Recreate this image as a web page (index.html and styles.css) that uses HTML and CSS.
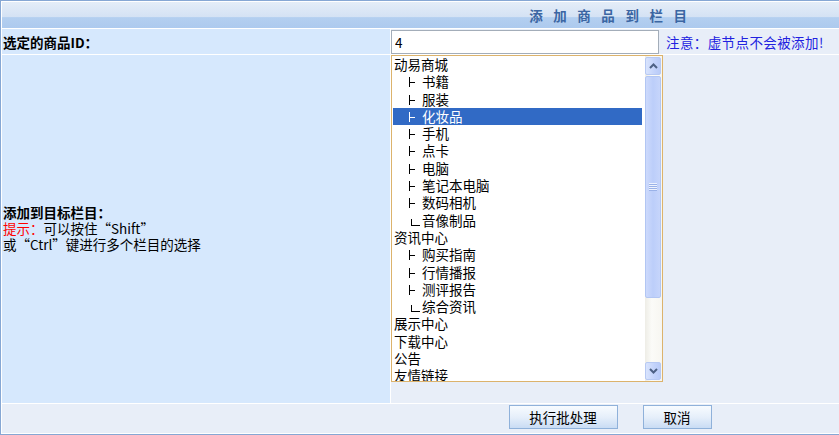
FILE: index.html
```html
<!DOCTYPE html>
<html lang="zh-CN">
<head>
    <meta charset="UTF-8">
    <title>添加商品到栏目</title>
    <link rel="stylesheet" href="styles.css">
</head>
<body>
<form class="batch-form">
    <table class="border-table">
        <colgroup><col class="col-label"><col></colgroup>
        <tr class="title-row">
            <th colspan="2">添 加 商 品 到 栏 目</th>
        </tr>
        <tr class="row-id">
            <td class="label"><strong>选定的商品ID：</strong></td>
            <td class="field">
                <div class="id-line">
                    <input class="id-input" type="text" name="ProductID" value="4">
                    <span class="note">注意：虚节点不会被添加!</span>
                </div>
            </td>
        </tr>
        <tr class="row-class">
            <td class="label">
                <div class="hint">
                    <strong>添加到目标栏目：</strong><br>
                    <em>提示：</em>可以按住“Shift”<br>
                    或“Ctrl”键进行多个栏目的选择
                </div>
            </td>
            <td class="field">
                <!-- 栏目列表 -->
                <div class="listbox">
                    <ul class="options">
                        <li class="item">动易商城</li>
                        <li class="item child"><i class="branch"></i>书籍</li>
                        <li class="item child"><i class="branch"></i>服装</li>
                        <li class="item child selected"><i class="branch"></i>化妆品</li>
                        <li class="item child"><i class="branch"></i>手机</li>
                        <li class="item child"><i class="branch"></i>点卡</li>
                        <li class="item child"><i class="branch"></i>电脑</li>
                        <li class="item child"><i class="branch"></i>笔记本电脑</li>
                        <li class="item child"><i class="branch"></i>数码相机</li>
                        <li class="item child"><i class="branch last"></i>音像制品</li>
                        <li class="item">资讯中心</li>
                        <li class="item child"><i class="branch"></i>购买指南</li>
                        <li class="item child"><i class="branch"></i>行情播报</li>
                        <li class="item child"><i class="branch"></i>测评报告</li>
                        <li class="item child"><i class="branch last"></i>综合资讯</li>
                        <li class="item">展示中心</li>
                        <li class="item">下载中心</li>
                        <li class="item">公告</li>
                        <li class="item">友情链接</li>
                    </ul>
                    <div class="scrollbar">
                        <span class="scroll-btn">
                            <svg width="9" height="6" viewBox="0 0 9 6"><polyline points="1,5 4.5,1.5 8,5" fill="none" stroke="#4d6185" stroke-width="2"/></svg>
                        </span>
                        <span class="thumb"><i class="grip"></i></span>
                        <span class="track"></span>
                        <span class="scroll-btn">
                            <svg width="9" height="6" viewBox="0 0 9 6"><polyline points="1,1 4.5,4.5 8,1" fill="none" stroke="#4d6185" stroke-width="2"/></svg>
                        </span>
                    </div>
                </div>
            </td>
        </tr>
        <tr class="row-actions">
            <td colspan="2">
                <div class="actions">
                    <button type="button" class="btn btn-run">执行批处理</button>
                    <button type="button" class="btn btn-cancel">取消</button>
                </div>
            </td>
        </tr>
    </table>
</form>
</body>
</html>
```

FILE: styles.css
```css
* {
    margin: 0;
    padding: 0;
    box-sizing: border-box;
}

html, body {
    overflow: hidden;
}

body {
    font-family: "Noto Sans CJK SC", sans-serif;
    font-size: 13.5px;
    color: #000;
    background: #fff;
}

/* 表格外框 */
.border-table {
    width: 1220px;
    table-layout: fixed;
    border: 1px solid #86a7d4;
    border-spacing: 1px;
    background: #fff;
}

.col-label {
    width: 388px;
}

.border-table td,
.border-table th {
    padding: 0;
}

/* 标题栏 */
.title-row th {
    height: 26px;
    background: linear-gradient(#e4edf8, #d4e2f4 57%, #b3cff0 60%, #adcaee);
    color: #3b66a3;
    font-size: 13.5px;
    letter-spacing: 3.75px;
    text-align: center;
}

.label {
    background: #d6e8fd;
    padding-left: 1px !important;
    vertical-align: middle;
}

.field {
    background: #e8eef8;
}

/* 商品ID */
.row-id td {
    height: 25px;
    vertical-align: bottom;
}

.row-id .label {
    vertical-align: middle;
}

.id-line {
    display: flex;
    align-items: center;
}

.id-input {
    width: 268px;
    height: 24px;
    border: 1px solid #a3adb9;
    padding: 0 3px;
    font: inherit;
    background: #fff;
}

.note {
    margin-left: 7px;
    color: #2121e0;
    letter-spacing: 0.4px;
}

/* 目标栏目 */
.row-class td {
    height: 348px;
}

.row-class .field {
    vertical-align: top;
}

.hint {
    line-height: 16px;
    padding-bottom: 3px;
}

.hint em {
    color: #f00;
    font-style: normal;
}

.listbox {
    display: flex;
    width: 272px;
    height: 327px;
    border: 1px solid #dcb36c;
    background: #fff;
}

.options {
    flex: 1;
    list-style: none;
    overflow: hidden;
    padding: 0 3px 0 1px;
}

.item {
    height: 17.3px;
    line-height: 17.3px;
    padding-left: 1px;
    white-space: nowrap;
}

.item.child {
    padding-left: 16px;
}

.item.selected {
    background: #316ac5;
    color: #fff;
}

/* 树形连接线 ├ └ */
.branch {
    display: inline-block;
    width: 13px;
    height: 10px;
    border-left: 1px solid currentColor;
    background: linear-gradient(currentColor, currentColor) no-repeat 0 5px / 5px 1px;
}

.branch.last {
    height: 7px;
    margin-left: 2px;
    width: 11px;
    background-position: 0 100%;
    background-size: 8px 1px;
}

/* XP 风格滚动条 */
.scrollbar {
    width: 17px;
    display: flex;
    flex-direction: column;
    padding: 1px 1px 1px 0;
    background: linear-gradient(to right, #eeede6, #fbfbf8 40%, #f7f6f1);
}

.scroll-btn {
    height: 18px;
    display: flex;
    align-items: center;
    justify-content: center;
    border: 1px solid #b7c9f3;
    border-radius: 2px;
    background: linear-gradient(to right, #d9e4fd, #c3d3fb 60%, #b9cbf8);
}

.thumb {
    height: 222px;
    margin-top: 1px;
    display: flex;
    align-items: center;
    justify-content: center;
    border: 1px solid #b2c6f3;
    border-radius: 2px;
    background: linear-gradient(to right, #cddafc, #bccefa 50%, #c6d5fb);
}

.grip {
    width: 8px;
    height: 8px;
    background: repeating-linear-gradient(#eef3fe 0 1px, #9ab2e8 1px 2px);
}

.track {
    flex: 1;
}

/* 按钮 */
.row-actions td {
    height: 29px;
    background: #e8eef8;
    vertical-align: top;
    padding-top: 1px;
}

.actions {
    display: flex;
    justify-content: center;
    gap: 25px;
}

.btn {
    height: 24px;
    font: inherit;
    color: #000;
    border: 1px solid #8fb1da;
    background: linear-gradient(#f7fbff, #e6effa 50%, #c9dcf4);
}

.btn-run {
    width: 109px;
}

.btn-cancel {
    width: 69px;
}
```
